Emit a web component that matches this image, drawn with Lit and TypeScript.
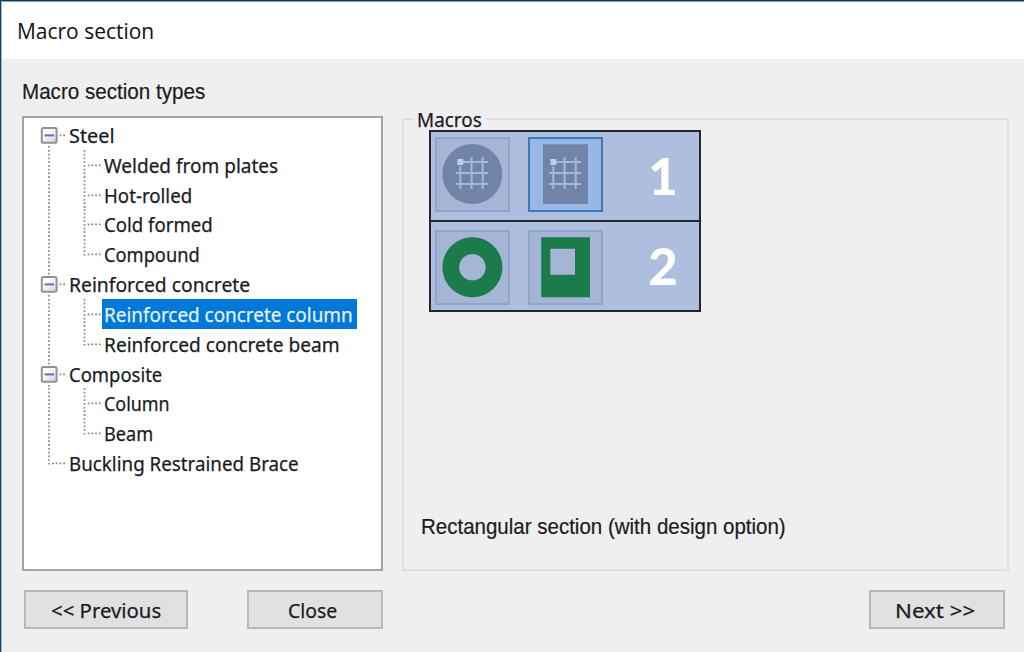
import { LitElement, html, css, svg, nothing } from "lit";
import { customElement, property, state } from "lit/decorators.js";
import { classMap } from "lit/directives/class-map.js";

/** One line of text set to an exact ink width. */
@customElement("ui-text")
class UiText extends LitElement {
  @property() text = "";
  @property({ type: Number }) width = 100;
  @property({ type: Number }) size = 21;
  @property({ type: Number }) baseline = 18;
  @property() face = "tahoma";

  static styles = css`
    :host { display: block; flex: none; }
    svg { display: block; overflow: visible; }
    text { fill: currentColor; white-space: pre; }
    .tahoma { font-family: "Noto Sans", "Open Sans", sans-serif; stroke: currentColor; stroke-width: 0.25; }
    .segoe { font-family: "Open Sans", "Noto Sans", sans-serif; }
    .sans { font-family: "Liberation Sans", sans-serif; stroke: currentColor; stroke-width: 0.2; }
  `;

  render() {
    return html`<svg width=${this.width} height="24" role="presentation">
      <text class=${this.face} x="-1" y=${this.baseline} font-size=${this.size}
        textLength=${this.width + 1.2} lengthAdjust="spacingAndGlyphs">${this.text}</text>
    </svg>`;
  }
}

interface Row {
  label: string;
  w: number;
  child?: boolean;
  last?: boolean;
  box?: boolean;
}

const ROWS: Row[] = [
  { label: "Steel", w: 44.5, box: true },
  { label: "Welded from plates", w: 173, child: true },
  { label: "Hot-rolled", w: 87, child: true },
  { label: "Cold formed", w: 107.5, child: true },
  { label: "Compound", w: 94.5, child: true, last: true },
  { label: "Reinforced concrete", w: 180, box: true },
  { label: "Reinforced concrete column", w: 247.5, child: true },
  { label: "Reinforced concrete beam", w: 234.5, child: true, last: true },
  { label: "Composite", w: 92, box: true },
  { label: "Column", w: 64.5, child: true },
  { label: "Beam", w: 48, child: true, last: true },
  { label: "Buckling Restrained Brace", w: 228.5, last: true },
];

const ROW_H = 29.83;
const MID = 15.4;

@customElement("section-tree")
class SectionTree extends LitElement {
  @state() selected = "Reinforced concrete column";

  static styles = css`
    :host {
      display: block; box-sizing: border-box; width: 361px; height: 455px;
      border: 2px solid #a0a3ac; background: #fff; padding-top: 2px; color: #1b1b1f;
    }
    .row { display: flex; align-items: center; height: 29.83px; }
    .row > svg { display: block; flex: none; }
    .label { display: flex; align-items: center; height: 29.83px; padding: 0 4.5px 0 0.5px; }
    .label.child { padding-left: 3px; padding-right: 4px; }
    .label.on { background: #0078d7; color: #e4f1fc; }
    .dots { stroke: #8a8a8a; stroke-width: 1.7; stroke-dasharray: 1.8 1.929; fill: none; }
    .box { fill: url(#face); stroke: #929292; stroke-width: 2; }
    .minus { stroke: #5a73b8; stroke-width: 2; }
  `;

  private guides(row: Row, i: number) {
    const end = i === ROWS.length - 1;
    return svg`<svg width=${row.child ? 78 : 45} height=${ROW_H}>
      <defs><linearGradient id="face" x1="0" y1="0" x2="1" y2="1">
        <stop offset="0.3" stop-color="#ffffff"/><stop offset="1" stop-color="#d2d2d2"/>
      </linearGradient></defs>
      ${row.box
        ? svg`<path class="dots" d=${`M25 ${i === 0 ? 26 : 0}V${i === 0 ? ROW_H : 6}M25 26V${ROW_H}M35.5 ${MID}H42`}/>
            <rect class="box" x="17.8" y="8" width="14.8" height="14.8" rx="1.5"/>
            <path class="minus" d="M20.5 15.4H30"/>`
        : svg`<path class="dots" d=${`M25 0V${end ? MID + 1 : ROW_H}`}/>`}
      ${end ? svg`<path class="dots" d=${`M28 ${MID}H42`}/>` : nothing}
      ${row.child
        ? svg`<path class="dots" d=${`M60.5 0V${row.last ? MID + 1 : ROW_H}M63.7 ${MID}H77`}/>`
        : nothing}
    </svg>`;
  }

  render() {
    return ROWS.map(
      (row, i) => html`<div class="row" @click=${() => (this.selected = row.label)}>
        ${this.guides(row, i)}
        <div class=${classMap({ label: true, child: !!row.child, on: row.label === this.selected })}>
          <ui-text .text=${row.label} .width=${row.w} .size=${20.8} .baseline=${19.6}></ui-text>
        </div>
      </div>`
    );
  }
}

const rebar = svg`
  <path class="bars" d="M28 25H53M21 36H53M21 47H53M25.3 29V52M36.6 20V52M47.7 20V52"/>
  <rect class="node" x="22.4" y="22" width="6" height="6"/>`;

@customElement("macro-palette")
class MacroPalette extends LitElement {
  static styles = css`
    :host {
      display: block; box-sizing: border-box; width: 272px; height: 182px;
      border: 2px solid #24272c; background: #adbedf;
    }
    .strip { display: flex; gap: 18px; box-sizing: border-box; height: 88px; padding: 5px 0 0 4px; }
    .strip + .strip { height: 90px; border-top: 2px solid #24272c; padding-top: 8px; }
    .tile {
      box-sizing: border-box; width: 75px; height: 75px; flex: none;
      border: 2px solid #93a4c9; background: #a4b5d6;
    }
    .tile.on { border-color: #3b79bd; background: #98b7e4; }
    svg { display: block; margin: -2px; }
    .grey { fill: #7184a7; }
    .green { fill: #1b7b4a; }
    .bars { stroke: #a6b7d9; stroke-width: 2; fill: none; }
    .node { fill: #bccdf0; }
    .num {
      flex: none; width: 48px; margin-left: 18px; text-align: center; color: #fff;
      font: 900 51px/77px Lato, sans-serif;
    }
    .num.low { line-height: 71px; }
  `;

  render() {
    return html`
      <div class="strip">
        <div class="tile"><svg width="75" height="75">
          <circle class="grey" cx="37.3" cy="37" r="30"/>${rebar}
        </svg></div>
        <div class="tile on"><svg width="75" height="75">
          <rect class="grey" x="15" y="7.3" width="45" height="59.7"/>${rebar}
        </svg></div>
        <div class="num">1</div>
      </div>
      <div class="strip">
        <div class="tile"><svg width="75" height="75">
          <path class="green" fill-rule="evenodd"
            d="M37.4 7.3a30 30 0 1 0 .01 0zM37.4 24a13.3 13.3 0 1 0 .01 0z"/>
        </svg></div>
        <div class="tile"><svg width="75" height="75">
          <path class="green" fill-rule="evenodd" d="M13.2 7.3H62V67.3H13.2zM22.3 18.7V44.8H47V18.7z"/>
        </svg></div>
        <div class="num low">2</div>
      </div>`;
  }
}

@customElement("app-root")
class AppRoot extends LitElement {
  static styles = css`
    :host {
      display: flex; flex-direction: column; box-sizing: border-box;
      width: 1024px; height: 652px; overflow: hidden; background: #efefef;
      border-top: 1px solid #06426a; border-left: 1px solid #06426a; color: #1b1b1f;
    }
    .frame {
      flex: 1; display: flex; flex-direction: column;
      border-top: 1px solid #8c9eac; border-left: 1px solid #a9b8c2;
    }
    .title { height: 57px; box-sizing: border-box; background: #fff; padding: 19px 0 0 15.5px; color: #111; }
    .body { display: grid; grid-template-columns: 361px 607px; column-gap: 19px; padding: 22px 0 0 20px; }
    .left { display: flex; flex-direction: column; gap: 11px; }
    .cap { padding-left: 1px; }
    fieldset {
      margin: 28px 0 0; padding: 0; height: 462px; box-sizing: border-box; min-width: 0;
      border: 2px solid #dfdfdf; display: block;
    }
    legend { height: 20px; margin-left: 10px; padding: 0 5px 0 3.5px; }
    .macros { padding: 1px 0 0 25px; }
    .desc { padding: 204px 0 0 17.5px; }
    .buttons { display: flex; padding: 19px 19px 0 22px; }
    button {
      display: flex; align-items: center; justify-content: center; box-sizing: border-box;
      width: 136px; height: 39px; padding: 0; border: 2px solid #b8b8b8;
      background: #e1e1e1; color: #1b1b1f; border-radius: 0;
    }
    .prev { width: 164px; margin-right: 59px; }
    .next { margin-left: auto; }
    button:not(.prev) { padding-right: 4px; }
  `;

  render() {
    return html`
      <div class="frame">
        <div class="title"><ui-text text="Macro section" .width=${136} .size=${22} face="segoe"></ui-text></div>
        <div class="body">
          <div class="left">
            <ui-text class="cap" text="Macro section types" .width=${182} .size=${22} .baseline=${18.3} face="sans"></ui-text>
            <section-tree></section-tree>
          </div>
          <fieldset>
            <legend><ui-text text="Macros" .width=${63.5} .size=${20.8} .baseline=${18.3}></ui-text></legend>
            <div class="macros"><macro-palette></macro-palette></div>
            <div class="desc">
              <ui-text text="Rectangular section (with design option)" .width=${363.5} .size=${22} face="sans"></ui-text>
            </div>
          </fieldset>
        </div>
        <div class="buttons">
          <button class="prev"><ui-text text="<< Previous" .width=${109} .size=${20.8} .baseline=${19.8}></ui-text></button>
          <button><ui-text text="Close" .width=${48} .size=${20.8} .baseline=${19.8}></ui-text></button>
          <button class="next"><ui-text text="Next >>" .width=${79} .size=${20.8} .baseline=${19.8}></ui-text></button>
        </div>
      </div>`;
  }
}
